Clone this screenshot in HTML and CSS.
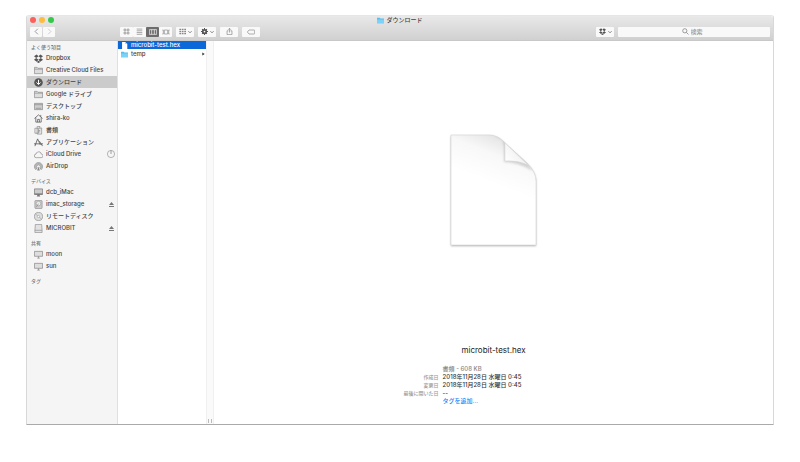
FILE: index.html
```html
<!DOCTYPE html>
<html lang="ja">
<head>
<meta charset="utf-8">
<title>ダウンロード</title>
<link rel="stylesheet" href="styles.css">
</head>
<body>
<svg width="0" height="0" class="defs" aria-hidden="true">
  <symbol id="dropbox" viewBox="0 0 20 20"><path fill="currentColor" d="M6 1 0 5l5 4 5-4zM14 1l6 4-5 4-5-4zM0 13l5-4 5 4-4 4zM20 13l-5-4-5 4 4 4zM6 18l4-3 4 3-4 2z"/></symbol>
  <symbol id="folder" viewBox="0 0 20 20"><path fill="#ddd" stroke="currentColor" stroke-width="1.500" d="M1 3h6l2 2h10v12H1zM1 7h18"/></symbol>
  <symbol id="blue-folder" viewBox="0 0 20 20"><path fill="#59bdee" d="M0 2h8l2 2h10v14H0z"/><path fill="#7bd2f8" d="M0 7h20v11H0z"/></symbol>
  <symbol id="download" viewBox="0 0 20 20"><circle cx="10" cy="10" r="9.500" fill="#555"/><path fill="none" stroke="#fff" stroke-width="2.200" d="M10 4v10M5.500 10l4.500 4.500 4.500-4.500"/></symbol>
  <symbol id="desktop" viewBox="0 0 20 20"><path fill="#ccc" stroke="currentColor" stroke-width="1.500" d="M1 3h18v14H1zM1 6h18M4 14h12"/></symbol>
  <symbol id="home" viewBox="0 0 20 20"><path fill="none" stroke="currentColor" stroke-width="1.700" d="M1 10l9-8 9 8M4 8v10h12V8M8 18v-6h4v6M15 6V2"/></symbol>
  <symbol id="docs" viewBox="0 0 20 20"><path fill="#eee" stroke="currentColor" stroke-width="1.500" d="M2 5h8v11H2zM7 1h6l4 4v13H7zM12 1v5h5M10 10h4M10 13h4"/></symbol>
  <symbol id="apps" viewBox="0 0 20 20"><path fill="none" stroke="currentColor" stroke-width="1.800" d="M2 18 8 2l6 13M0 13h13M12 7l7 11M13 13h7"/></symbol>
  <symbol id="cloud" viewBox="0 0 20 20"><path fill="none" stroke="currentColor" stroke-width="1.500" d="M5 17a4 4 0 0 1-.5-8A4 4 0 0 1 8 5a5 5 0 0 1 8 4 4 4 0 0 1 0 8z"/></symbol>
  <symbol id="airdrop" viewBox="0 0 20 20"><path fill="#ccc" stroke="currentColor" stroke-width="1.500" d="M4 17a9 9 0 1 1 12 0l-3-4a4 4 0 1 0-6 0z"/><path fill="none" stroke="currentColor" d="M5.500 15a6.500 6.500 0 1 1 9 0"/><path fill="currentColor" d="m10 10 3 9H7z"/></symbol>
  <symbol id="monitor" viewBox="0 0 20 20"><path fill="#ddd" stroke="currentColor" stroke-width="1.600" d="M1 3h18v11H1zM7 18h6M10 14v4"/></symbol>
  <symbol id="imac" viewBox="0 0 20 20"><path fill="#ccc" stroke="#777" stroke-width="1.600" d="M1 2h18v12H1z"/><path fill="#777" d="M1 12h18v3H1zM8 15h4l2 4H6z"/></symbol>
  <symbol id="disk" viewBox="0 0 20 20"><rect x="2" y="1" width="16" height="18" rx="2" fill="#ccc" stroke="currentColor" stroke-width="1.400"/><circle cx="10" cy="8" r="5" fill="#eee" stroke="currentColor"/><path stroke="currentColor" stroke-width="1.500" d="m5 16 5-8"/></symbol>
  <symbol id="disc" viewBox="0 0 20 20"><circle cx="10" cy="10" r="9" fill="#ddd" stroke="currentColor" stroke-width="1.400"/><circle cx="10" cy="10" r="2.500" fill="#fff" stroke="currentColor"/><path stroke="currentColor" d="m3 4 5 4M12 12l5 4"/></symbol>
  <symbol id="drive" viewBox="0 0 20 20"><path fill="#e2e2e2" stroke="currentColor" stroke-width="1.400" d="M3 1h14l1 13v5H2v-5zM2 14h16"/></symbol>
  <symbol id="eject" viewBox="0 0 10 10"><path fill="#777" d="M5 0l5 6H0zM0 8h10v2H0z"/></symbol>
  <symbol id="chevron" viewBox="0 0 10 10"><path fill="none" stroke="#666" stroke-width="2" d="m1 3 4 4 4-4"/></symbol>
  <symbol id="grid" viewBox="0 0 20 20"><path fill="none" stroke="currentColor" stroke-width="2" d="M3 3h5v5H3zM12 3h5v5h-5zM3 12h5v5H3zM12 12h5v5h-5z"/></symbol>
</svg>
<main class="window">
  <header class="titlebar">
    <div class="title-row">
      <div class="lights"><button class="light close" aria-label="閉じる"></button><button class="light minimize" aria-label="しまう"></button><button class="light expand" aria-label="拡大"></button></div>
      <h1 class="title"><svg class="small-icon"><use href="#blue-folder"/></svg>ダウンロード</h1>
    </div>
    <div class="toolbar">
      <div class="group history">
        <button class="tool" aria-label="戻る"><svg viewBox="0 0 10 10" class="arrow"><path d="M7 1 3 5l4 4"/></svg></button>
        <button class="tool muted" aria-label="進む"><svg viewBox="0 0 10 10" class="arrow"><path d="m3 1 4 4-4 4"/></svg></button>
      </div>
      <div class="group views">
        <button class="tool" aria-label="アイコン"><svg class="icon-tool"><use href="#grid"/></svg></button>
        <button class="tool" aria-label="リスト"><svg class="icon-tool" viewBox="0 0 20 20"><path stroke="currentColor" stroke-width="2" d="M2 3h16M2 8h16M2 13h16M2 18h16"/></svg></button>
        <button class="tool active" aria-label="カラム"><svg class="icon-wide" viewBox="0 0 24 18"><path fill="none" stroke="currentColor" stroke-width="2" d="M1 2h22v14H1zM8 2v14M16 2v14"/></svg></button>
        <button class="tool" aria-label="ギャラリー"><svg class="icon-wide" viewBox="0 0 24 18"><path fill="none" stroke="currentColor" stroke-width="2" d="M7 3h10v12H7zM1 3h3v12H1M23 3h-3v12h3"/></svg></button>
      </div>
      <button class="tool button" aria-label="並べ替え"><svg class="icon-tool" viewBox="0 0 20 20"><path fill="currentColor" d="M1 2h5v4H1zM8 2h5v4H8zM15 2h5v4h-5zM1 8h5v4H1zM8 8h5v4H8zM15 8h5v4h-5zM1 14h5v4H1zM8 14h5v4H8zM15 14h5v4h-5z"/></svg><svg class="chevron"><use href="#chevron"/></svg></button>
      <button class="tool button" aria-label="操作"><svg class="icon-tool dark" viewBox="0 0 20 20"><circle cx="10" cy="10" r="5" fill="none" stroke="currentColor" stroke-width="5"/><path stroke="currentColor" stroke-width="3" d="M10 0v5M10 15v5M0 10h5M15 10h5M3 3l3 3M14 14l3 3M17 3l-3 3M3 17l3-3"/></svg><svg class="chevron"><use href="#chevron"/></svg></button>
      <button class="tool button" aria-label="共有"><svg class="icon-tool" viewBox="0 0 20 20"><path fill="none" stroke="currentColor" stroke-width="2" d="M7 8H3v11h14V8h-4M10 13V1M6 5l4-4 4 4"/></svg></button>
      <button class="tool button" aria-label="タグ"><svg class="icon-wide" viewBox="0 0 24 18"><path fill="none" stroke="currentColor" stroke-width="2" d="M1 9l5-6h15q2 0 2 2v8q0 2-2 2H6z"/></svg></button>
      <button class="tool button dropbox" aria-label="Dropbox"><svg class="icon-tool dark"><use href="#dropbox"/></svg><svg class="chevron"><use href="#chevron"/></svg></button>
      <label class="search"><svg class="small-icon" viewBox="0 0 20 20"><path fill="none" stroke="#777" stroke-width="2" d="M14 8A6 6 0 1 1 2 8a6 6 0 0 1 12 0zM12.500 12.500l6 6"/></svg><input type="text" placeholder="検索" aria-label="検索"></label>
    </div>
  </header>
  <div class="content">
    <nav class="sidebar">
      <h2>よく使う項目</h2>
      <ul>
        <li><a href="#"><svg class="icon dark"><use href="#dropbox"/></svg>Dropbox</a></li>
        <li><a href="#"><svg class="icon"><use href="#folder"/></svg>Creative Cloud Files</a></li>
        <li><a href="#" class="current"><svg class="icon"><use href="#download"/></svg>ダウンロード</a></li>
        <li><a href="#"><svg class="icon"><use href="#folder"/></svg>Google ドライブ</a></li>
        <li><a href="#"><svg class="icon"><use href="#desktop"/></svg>デスクトップ</a></li>
        <li><a href="#"><svg class="icon dark"><use href="#home"/></svg>shira-ko</a></li>
        <li><a href="#"><svg class="icon"><use href="#docs"/></svg>書類</a></li>
        <li><a href="#"><svg class="icon dark"><use href="#apps"/></svg>アプリケーション</a></li>
        <li><a href="#"><svg class="icon"><use href="#cloud"/></svg>iCloud Drive<svg class="progress" viewBox="0 0 20 20"><circle cx="10" cy="10" r="9" fill="none" stroke="#888" stroke-width="1.500"/><path stroke="#888" stroke-width="2" d="M10 1v9"/></svg></a></li>
        <li><a href="#"><svg class="icon"><use href="#airdrop"/></svg>AirDrop</a></li>
      </ul>
      <h2>デバイス</h2>
      <ul>
        <li><a href="#"><svg class="icon"><use href="#imac"/></svg>dcb_iMac</a></li>
        <li><a href="#"><svg class="icon"><use href="#disk"/></svg>imac_storage<svg class="eject"><use href="#eject"/></svg></a></li>
        <li><a href="#"><svg class="icon"><use href="#disc"/></svg>リモートディスク</a></li>
        <li><a href="#"><svg class="icon"><use href="#drive"/></svg>MICROBIT<svg class="eject"><use href="#eject"/></svg></a></li>
      </ul>
      <h2>共有</h2>
      <ul>
        <li><a href="#"><svg class="icon"><use href="#monitor"/></svg>moon</a></li>
        <li><a href="#"><svg class="icon"><use href="#monitor"/></svg>sun</a></li>
      </ul>
      <h2>タグ</h2>
    </nav>
    <section class="files">
      <a href="#" class="file selected"><svg class="small-icon" viewBox="0 0 20 20"><path fill="#fff" d="M3 0h9l6 6v14H3z"/><path fill="#a9c8ed" d="M12 0v6h6z"/></svg>microbit-test.hex</a>
      <a href="#" class="file"><svg class="small-icon"><use href="#blue-folder"/></svg>temp<svg class="disclosure" viewBox="0 0 10 10"><path fill="#333" d="m1 0 8 5-8 5z"/></svg></a>
    </section>
    <div class="gutter"><span class="grip"></span></div>
    <article class="preview">
      <div class="art">
        <svg class="page" viewBox="0 0 94 120">
          <defs>
            <linearGradient id="sheet" x1="0.350" y1="1" x2="0.650" y2="0"><stop offset="0.550" stop-color="#fff"/><stop offset="0.800" stop-color="#f8f8f8"/><stop offset="1" stop-color="#e0e0e0"/></linearGradient>
            <linearGradient id="fold" x1="0" y1="0.800" x2="0.550" y2="0.400"><stop offset="0" stop-color="#fff"/><stop offset="1" stop-color="#f2f2f2"/></linearGradient>
            <filter id="soft" x="-30%" y="-30%" width="160%" height="160%"><feGaussianBlur stdDeviation="1.200"/></filter>
            <clipPath id="sheet-clip"><path d="M4 4h38q9 0 16 8l22 20q9 9 9 18v64H4z"/></clipPath>
          </defs>
          <path d="M4 5h38q9 0 16 8l22 20q9 9 9 18v64H4z" fill="#777" opacity="0.600" filter="url(#soft)"/>
          <path d="M4 4h38q9 0 16 8l22 20q9 9 9 18v64H4z" fill="url(#sheet)" stroke="#d4d4d4" stroke-width="0.600"/>
          <g clip-path="url(#sheet-clip)"><path d="M46 3q10 3 11 12v16q14 0 29 9L80 31 58 11z" fill="#999" opacity="0.400" filter="url(#soft)"/></g>
          <path d="M58 12v18q12-1 23 4z" fill="url(#fold)" stroke="#d8d8d8" stroke-width="0.600"/>
        </svg>
      </div>
      <h2 class="file-name">microbit-test.hex</h2>
      <dl class="details">
        <dt></dt><dd class="kind">書類 - 608 KB</dd>
        <dt>作成日</dt><dd>2018年11月28日 水曜日 0:45</dd>
        <dt>変更日</dt><dd>2018年11月28日 水曜日 0:45</dd>
        <dt>最後に開いた日</dt><dd>--</dd>
        <dt></dt><dd><a href="#" class="add-tag">タグを追加...</a></dd>
      </dl>
    </article>
  </div>
</main>
</body>
</html>
```
FILE: styles.css
```css
* { box-sizing: border-box; }
body {
  margin: 0;
  min-height: 100vh;
  padding: 15px 26px 37px;
  display: flex;
  background: #fff;
  color: #444;
  font: 500 6px/8px Inter, "Noto Sans CJK JP", sans-serif;
}
h1, h2, ul, dl, dd { margin: 0; padding: 0; }
h1, h2 { font: inherit; }
ul { list-style: none; }
a { color: inherit; text-decoration: none; }
button { padding: 0; border: 0; color: #888; font: inherit; }
svg { flex: none; }
.defs { position: absolute; }
.window {
  flex: 1;
  display: flex;
  flex-direction: column;
  border: 1px solid #d8d8d8;
  border-top-color: #e6e6e6;
  border-bottom-color: #aaa;
  border-radius: 3px 3px 1px 1px;
  overflow: hidden;
}
.titlebar {
  height: 25px;
  background: linear-gradient(#e9e9e9, #d0d0d0);
  border-bottom: 1px solid #c8c8c8;
}
.title-row {
  height: 8px;
  display: grid;
  grid-template-columns: 1fr auto 1fr;
  align-items: center;
}
.lights { display: flex; gap: 3px; padding-left: 3px; }
.light { width: 6px; height: 6px; border-radius: 50%; }
.close { background: #fc605b; }
.minimize { background: #fdbc40; }
.expand { background: #34c84a; }
.title { display: flex; align-items: center; gap: 2px; color: #444; }
.small-icon { width: 7px; height: 7px; }
.toolbar { display: flex; align-items: center; gap: 4px; padding: 0 3px; height: 15px; }
.group { display: flex; gap: 1px; }
.tool {
  display: flex;
  align-items: center;
  justify-content: center;
  gap: 2px;
  width: 12px;
  height: 10px;
  background: #f9f9f9;
  border-radius: 1px;
}
.views { margin-left: 61px; gap: 0; }
.views .tool { width: 13px; }
.views .active { background: #6c6c6c; color: #fff; }
.toolbar .button { width: 18px; }
.dropbox { margin-left: auto; }
.icon-tool { width: 7px; height: 7px; }
.icon-wide { width: 8px; height: 6px; }
.chevron { width: 4px; height: 4px; }
.dark { color: #555; }
.arrow { width: 7px; height: 7px; fill: none; stroke: #777; stroke-width: 1; }
.muted .arrow { stroke: #bbb; }
.search {
  display: flex;
  align-items: center;
  justify-content: center;
  gap: 2px;
  width: 152px;
  height: 10px;
  background: #f9f9f9;
  border-radius: 1px;
}
.search input {
  width: 16px;
  height: 8px;
  padding: 0;
  border: 0;
  outline: 0;
  background: none;
  font: inherit;
}
.search input::placeholder { color: #999; }
.content { flex: 1; display: flex; }
.sidebar {
  width: 91px;
  padding-top: 2px;
  background: #f5f5f5;
  border-right: 1px solid #e0e0e0;
}
.sidebar h2 {
  padding-left: 4px;
  color: #777;
  font-size: 5px;
  line-height: 9px;
}
.sidebar ul { margin-bottom: 5px; }
.sidebar li a {
  display: flex;
  align-items: center;
  gap: 3px;
  height: 12px;
  padding: 0 3px 0 7px;
  white-space: nowrap;
}
.sidebar .current { background: #cbcbcb; }
.icon { width: 9px; height: 9px; color: #888; }
.icon.dark { color: #555; }
.progress { width: 8px; height: 8px; margin-left: auto; margin-right: -1px; }
.eject { width: 5px; height: 5px; margin-left: auto; }
.files { display: flex; flex-direction: column; gap: 1px; width: 88px; }
.file {
  display: flex;
  align-items: center;
  gap: 3px;
  height: 8px;
  padding: 0 1px 0 3px;
}
.selected { background: #0a68d8; color: #fff; }
.disclosure { width: 3px; height: 4px; margin-left: auto; }
.gutter {
  display: flex;
  align-items: flex-end;
  justify-content: center;
  width: 8px;
  padding-bottom: 1px;
  background: #fafafa;
  border: solid #f0f0f0;
  border-width: 0 1px;
}
.grip { width: 4px; height: 4px; border: solid #bbb; border-width: 0 1px; }
.preview { flex: 1; display: flex; flex-direction: column; align-items: center; }
.art { flex: 1; display: flex; align-items: center; padding-bottom: 4px; }
.page { width: 94px; height: 120px; }
.file-name { color: #222; font-size: 8px; font-weight: 400; line-height: 12px; }
.details {
  align-self: stretch;
  display: grid;
  grid-template-columns: 225fr 331fr;
  column-gap: 4px;
  margin: 9px 0 19px;
  color: #333;
}
.details dt { color: #999; font-size: 5px; text-align: right; }
.kind { color: #888; }
.add-tag { color: #1684fc; }
```
